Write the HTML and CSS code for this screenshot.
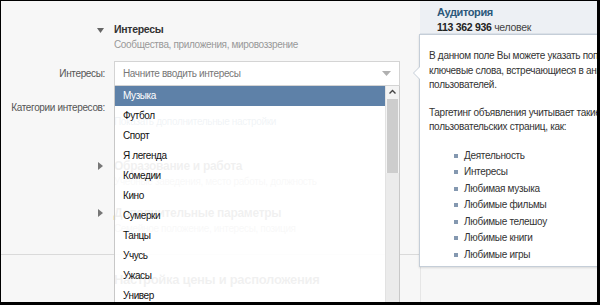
FILE: index.html
```html
<!DOCTYPE html>
<html lang="ru">
<head>
    <meta charset="UTF-8">
    <title>Таргетинг: интересы</title>
    <link rel="stylesheet" href="styles.css">
</head>
<body>
    <div class="screen">
        <div class="main">
            <div class="form">
                <div class="tri-cell">
                    <svg class="tri" width="7" height="7" viewBox="0 0 7 7"><path d="M0 1h7L3.5 6z" fill="#666"/></svg>
                </div>
                <div class="sec-head">
                    <div class="sec-title">Интересы</div>
                    <div class="sec-sub">Сообщества, приложения, мировоззрение</div>
                </div>

                <div class="label row-interests">Интересы:</div>
                <div class="field">
                    <div class="input">
                        <span class="placeholder">Начните вводить интересы</span>
                        <svg class="caret" width="9" height="6" viewBox="0 0 9 6"><path d="M0 0h9L4.5 5z" fill="#b0b0b0"/></svg>
                    </div>
                    <div class="dropdown">
                        <ul class="options">
                            <li class="active">Музыка</li>
                            <li>Футбол</li>
                            <li>Спорт</li>
                            <li>Я легенда</li>
                            <li>Комедии</li>
                            <li>Кино</li>
                            <li>Сумерки</li>
                            <li>Танцы</li>
                            <li>Учусь</li>
                            <li>Ужасы</li>
                            <li>Универ</li>
                            <li>Приколы</li>
                        </ul>
                        <div class="scrollbar">
                            <svg class="arrow" width="13" height="12" viewBox="0 0 13 12"><path d="M3.5 7.5l3-3 3 3" stroke="#444" stroke-width="1.4" fill="none"/></svg>
                            <div class="thumb"></div>
                            <div class="track"></div>
                            <svg class="arrow" width="13" height="12" viewBox="0 0 13 12"><path d="M3.5 4.5l3 3 3-3" stroke="#444" stroke-width="1.4" fill="none"/></svg>
                        </div>
                    </div>
                </div>

                <div class="label row-cats">Категории интересов:</div>
                <div class="field cats"></div>

                <div></div>
                <div class="more-link">Показать дополнительные настройки</div>

                <div class="tri-cell collapsed first">
                    <svg class="tri" width="7" height="8" viewBox="0 0 7 8"><path d="M1 0v8l5-4z" fill="#777"/></svg>
                </div>
                <div class="sec-head collapsed first">
                    <div class="sec-title">Образование и работа</div>
                    <div class="sec-sub">Учебные заведения, место работы, должность</div>
                </div>

                <div class="tri-cell collapsed">
                    <svg class="tri" width="7" height="8" viewBox="0 0 7 8"><path d="M1 0v8l5-4z" fill="#777"/></svg>
                </div>
                <div class="sec-head collapsed">
                    <div class="sec-title">Дополнительные параметры</div>
                    <div class="sec-sub">Семейное положение, интересы, позиция</div>
                </div>
            </div>

            <div class="price">
                <div class="price-title">Настройка цены и расположения</div>
                <div class="price-label">Оплата:</div>
            </div>
        </div>

        <div class="side">
            <div class="audience">
                <div class="aud-title">Аудитория</div>
                <div class="aud-count"><b>113 362 936</b> человек</div>
            </div>
            <div class="side-rest"></div>
        </div>

        <div class="hint">
            <div class="hint-arrow"></div>
            <p>В данном поле Вы можете указать популярные<br>ключевые слова, встречающиеся в анкетах<br>пользователей.</p>
            <p>Таргетинг объявления учитывает такие поля<br>пользовательских страниц, как:</p>
            <ul class="fields">
                <li>Деятельность</li>
                <li>Интересы</li>
                <li>Любимая музыка</li>
                <li>Любимые фильмы</li>
                <li>Любимые телешоу</li>
                <li>Любимые книги</li>
                <li>Любимые игры</li>
            </ul>
        </div>
    </div>
</body>
</html>
```

FILE: styles.css
```css
html {
    background-color: #000;
}
body {
    margin: 0;
}
.screen {
    position: relative;
    display: flex;
    width: 596px;
    height: 301px;
    margin: 1px 0 0 1px;
    overflow: hidden;
    background-color: #f7f7f7;
    color: #333;
    font-family: "Liberation Sans", Arial, sans-serif;
    font-size: 10px;
    letter-spacing: -0.35px;
}
.main {
    width: 418px;
    flex: none;
    padding-top: 20px;
}
.form {
    display: grid;
    grid-template-columns: 104px 286px;
    column-gap: 9px;
    align-items: center;
}
.tri-cell {
    align-self: start;
    text-align: right;
    padding-top: 4px;
}
.tri {
    display: inline-block;
    margin-right: 1px;
}
.sec-title {
    font-size: 10.5px;
    font-weight: bold;
    letter-spacing: -0.3px;
    line-height: 16px;
    color: #333;
}
.sec-sub {
    color: #999;
    line-height: 16px;
}
.label {
    text-align: right;
    color: #555;
    white-space: nowrap;
}
.row-interests {
    margin-top: 8px;
}
.field {
    position: relative;
}
.input {
    display: flex;
    align-items: center;
    justify-content: space-between;
    height: 23px;
    margin-top: 8px;
    padding: 0 8px 0 8px;
    background-color: #fff;
    border: 1px solid #d4d4d4;
}
.placeholder {
    color: #777;
}
.caret {
    display: block;
}
.row-cats {
    margin-top: 10px;
}
.cats {
    height: 22px;
    margin-top: 10px;
}
.more-link {
    margin-top: -2px;
    color: #2b587a;
}
.sec-head.collapsed,
.tri-cell.collapsed {
    margin-top: 15px;
}
.sec-head.collapsed.first,
.tri-cell.collapsed.first {
    margin-top: 31px;
}
.tri-cell.collapsed {
    padding-top: 3px;
}
.sec-head.collapsed .sec-title {
    font-size: 12px;
}
.price {
    margin-top: 17px;
    border-top: 1px solid #dadada;
    padding: 16px 0 0 0;
    display: grid;
    grid-template-columns: 104px 286px;
    column-gap: 9px;
}
.price-title {
    grid-column: 2;
    font-size: 13px;
    font-weight: bold;
    letter-spacing: -0.3px;
    line-height: 18px;
}
.price-label {
    grid-column: 1;
    margin-top: 13px;
    text-align: right;
    color: #555;
}

/* suggestion list */
.dropdown {
    position: absolute;
    left: 0;
    top: 100%;
    z-index: 2;
    display: flex;
    width: 284px;
    height: 240px;
    background-color: rgba(255, 255, 255, 0.93);
    border: 1px solid #c8c8c8;
    border-top: none;
}
.options {
    flex: 1;
    margin: 0;
    padding: 0;
    list-style: none;
}
.options li {
    height: 20px;
    line-height: 20px;
    padding-left: 8px;
    color: #111;
    letter-spacing: -0.4px;
}
.options li.active {
    background-color: #5e81a8;
    color: #fff;
}
.scrollbar {
    display: flex;
    flex-direction: column;
    width: 13px;
    background-color: #f4f4f4;
    border-left: 1px solid #e2e2e2;
}
.arrow {
    display: block;
    flex: none;
}
.thumb {
    height: 74px;
    margin: 1px 1px 0 1px;
    background-color: #cdcdcd;
}
.track {
    flex: 1;
    background-color: #ebebeb;
}

/* right column */
.side {
    flex: 1;
    display: flex;
    flex-direction: column;
}
.audience {
    height: 32px;
    margin-left: 1px;
    padding-left: 17px;
    background-color: #edf0f4;
    border-bottom: 1px solid #dde3ea;
}
.aud-title {
    padding-top: 3px;
    color: #2b587a;
    font-size: 11px;
    font-weight: bold;
    letter-spacing: -0.4px;
    line-height: 17px;
}
.aud-count {
    color: #444;
    font-size: 10.5px;
    letter-spacing: -0.3px;
    line-height: 13px;
}
.aud-count b {
    color: #222;
}
.side-rest {
    flex: 1;
    border-left: 1px solid #e6e6e6;
    margin-left: 1px;
}

/* help tooltip */
.hint {
    position: absolute;
    left: 418px;
    top: 33px;
    width: 200px;
    height: 233px;
    padding: 14px 0 0 9px;
    box-sizing: border-box;
    background-color: #fff;
    border: 1px solid #c5ced8;
    box-shadow: 0 1px 2px rgba(0, 0, 0, 0.12);
    white-space: nowrap;
    line-height: 14.5px;
    letter-spacing: -0.3px;
    color: #333;
}
.hint-arrow {
    position: absolute;
    left: -7px;
    top: 31px;
    width: 0;
    height: 0;
    border-top: 7px solid transparent;
    border-bottom: 7px solid transparent;
    border-right: 7px solid #c5ced8;
}
.hint-arrow::after {
    content: "";
    position: absolute;
    left: 1px;
    top: -6px;
    border-top: 6px solid transparent;
    border-bottom: 6px solid transparent;
    border-right: 6px solid #fff;
}
.hint p {
    margin: 0 0 13px 0;
}
.fields {
    margin: 0;
    padding: 0 0 0 35px;
    list-style: none;
}
.fields li {
    position: relative;
    line-height: 16.5px;
}
.fields li::before {
    content: "";
    position: absolute;
    left: -10px;
    top: 6px;
    width: 4px;
    height: 4px;
    background-color: #8498b0;
}
```
